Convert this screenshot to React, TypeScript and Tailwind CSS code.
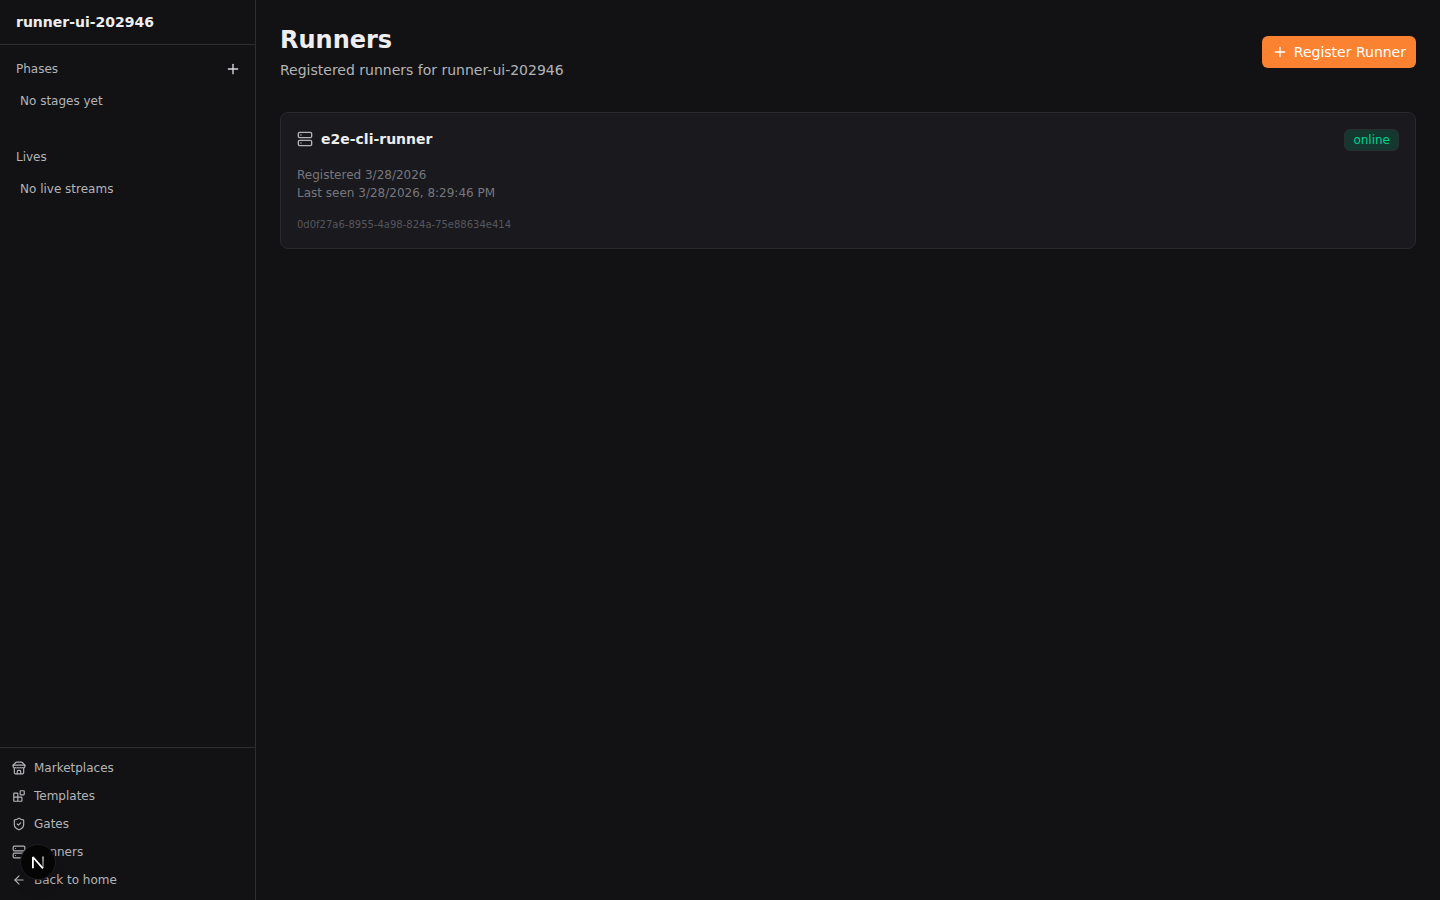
import type { ElementType, SVGProps } from "react"
import { ArrowLeft, Plus, Server, ShieldCheck } from "lucide-react"

interface Runner {
  id: string
  name: string
  status: string
  registeredAt: string
  lastSeenAt: string
}

interface NavItem {
  label: string
  href: string
  icon: ElementType
}

const iconProps: SVGProps<SVGSVGElement> = {
  viewBox: "0 0 24 24",
  fill: "none",
  stroke: "currentColor",
  strokeWidth: 2,
  strokeLinecap: "round",
  strokeLinejoin: "round",
}

function StoreIcon({ className }: { className?: string }) {
  return (
    <svg {...iconProps} className={className} aria-hidden="true">
      <path d="m2 7 4.41-4.41A2 2 0 0 1 7.83 2h8.34a2 2 0 0 1 1.42.59L22 7" />
      <path d="M4 12v8a2 2 0 0 0 2 2h12a2 2 0 0 0 2-2v-8" />
      <path d="M15 22v-4a2 2 0 0 0-2-2h-2a2 2 0 0 0-2 2v4" />
      <path d="M2 7h20" />
      <path d="M22 7v3a2 2 0 0 1-2 2a2.7 2.7 0 0 1-1.59-.63.7.7 0 0 0-.82 0A2.7 2.7 0 0 1 16 12a2.7 2.7 0 0 1-1.59-.63.7.7 0 0 0-.82 0A2.7 2.7 0 0 1 12 12a2.7 2.7 0 0 1-1.59-.63.7.7 0 0 0-.82 0A2.7 2.7 0 0 1 8 12a2.7 2.7 0 0 1-1.59-.63.7.7 0 0 0-.82 0A2.7 2.7 0 0 1 4 12a2 2 0 0 1-2-2V7" />
    </svg>
  )
}

function BlocksIcon({ className }: { className?: string }) {
  return (
    <svg {...iconProps} className={className} aria-hidden="true">
      <rect width="7" height="7" x="14" y="3" rx="1" />
      <path d="M10 21V8a1 1 0 0 0-1-1H4a1 1 0 0 0-1 1v12a1 1 0 0 0 1 1h12a1 1 0 0 0 1-1v-5a1 1 0 0 0-1-1H3" />
    </svg>
  )
}

const project = "runner-ui-202946"

const navItems: NavItem[] = [
  { label: "Marketplaces", href: "#marketplaces", icon: StoreIcon },
  { label: "Templates", href: "#templates", icon: BlocksIcon },
  { label: "Gates", href: "#gates", icon: ShieldCheck },
  { label: "Runners", href: "#runners", icon: Server },
  { label: "Back to home", href: "#home", icon: ArrowLeft },
]

const runners: Runner[] = [
  {
    id: "0d0f27a6-8955-4a98-824a-75e88634e414",
    name: "e2e-cli-runner",
    status: "online",
    registeredAt: "3/28/2026",
    lastSeenAt: "3/28/2026, 8:29:46 PM",
  },
]

function Sidebar() {
  return (
    <aside className="flex w-64 shrink-0 flex-col border-r border-[#2e2e31] text-xs text-[#b4b4b8]">
      <div className="border-b border-[#2e2e31] px-4 py-3">
        <h2 className="text-sm font-semibold text-[#eeeef0]">{project}</h2>
      </div>

      <div className="flex flex-1 flex-col gap-4 overflow-y-auto p-2">
        <section className="pb-2">
          <div className="flex h-8 items-center justify-between pl-2 pr-1.5">
            <h3>Phases</h3>
            <button type="button" aria-label="Add phase" className="rounded text-[#dcdcdf]">
              <Plus className="size-4" />
            </button>
          </div>
          <p className="px-3 py-2">No stages yet</p>
        </section>

        <section>
          <div className="flex h-8 items-center px-2">
            <h3>Lives</h3>
          </div>
          <p className="px-3 py-2">No live streams</p>
        </section>
      </div>

      <nav className="flex flex-col gap-1 border-t border-[#2e2e31] p-2">
        {navItems.map(({ label, href, icon: Icon }) => (
          <a key={label} href={href} className="flex items-center gap-2 rounded px-1 py-1">
            <Icon className="size-3.5" />
            {label}
          </a>
        ))}
      </nav>
    </aside>
  )
}

function RunnerCard({ runner }: { runner: Runner }) {
  return (
    <article className="rounded-lg border border-[#2a2a2d] bg-[#19191e] p-4">
      <div className="flex items-start justify-between">
        <div className="flex items-center gap-2">
          <Server className="size-4 text-[#b4b4b8]" />
          <h2 className="text-sm font-semibold text-[#eeeef0]">{runner.name}</h2>
        </div>
        <span className="rounded-md border border-[#2a2e2f] bg-[#15382e] px-2 py-0.5 text-xs text-[#00d492]">
          {runner.status}
        </span>
      </div>

      <div className="mt-4 flex flex-col gap-0.5 text-xs text-[#77777d]">
        <p>Registered {runner.registeredAt}</p>
        <p>Last seen {runner.lastSeenAt}</p>
      </div>

      <p className="mt-4 text-[10px] leading-[15px] text-[#57575c]">{runner.id}</p>
    </article>
  )
}

// Floating dev tools badge, sits over the bottom left corner
function DevBadge() {
  return (
    <button
      type="button"
      aria-label="Open dev tools"
      className="fixed bottom-5 left-5 flex size-9 items-center justify-center rounded-full border border-[#1f1f20] bg-[#050505] shadow-lg"
    >
      <svg width="40" height="40" viewBox="0 0 40 40" fill="none" className="shrink-0">
        <defs>
          <linearGradient id="n-stem" x1="0" y1="14" x2="0" y2="26" gradientUnits="userSpaceOnUse">
            <stop stopColor="white" stopOpacity="0.75" />
            <stop offset="1" stopColor="white" stopOpacity="0.35" />
          </linearGradient>
        </defs>
        <path d="M25 14.4V26" stroke="url(#n-stem)" strokeWidth="1.6" />
        <path d="M14.9 26.2V15L24.9 26.4" stroke="white" strokeWidth="1.8" strokeLinejoin="bevel" />
      </svg>
    </button>
  )
}

export default function App() {
  return (
    <div className="flex min-h-screen bg-[#121214] font-['DejaVu_Sans',sans-serif]">
      <Sidebar />

      <main className="min-w-0 flex-1 p-6">
        <header className="mb-8 flex items-center justify-between">
          <div>
            <h1 className="text-2xl font-bold text-[#eeeef0]">Runners</h1>
            <p className="mt-1 text-sm text-[#b4b4b8]">Registered runners for {project}</p>
          </div>
          <button
            type="button"
            className="flex h-8 items-center gap-1.5 rounded-md bg-[#fb8230] px-2.5 text-sm text-white"
          >
            <Plus className="size-4" />
            Register Runner
          </button>
        </header>

        <div className="flex flex-col gap-4">
          {runners.map((runner) => (
            <RunnerCard key={runner.id} runner={runner} />
          ))}
        </div>
      </main>

      <DevBadge />
    </div>
  )
}
